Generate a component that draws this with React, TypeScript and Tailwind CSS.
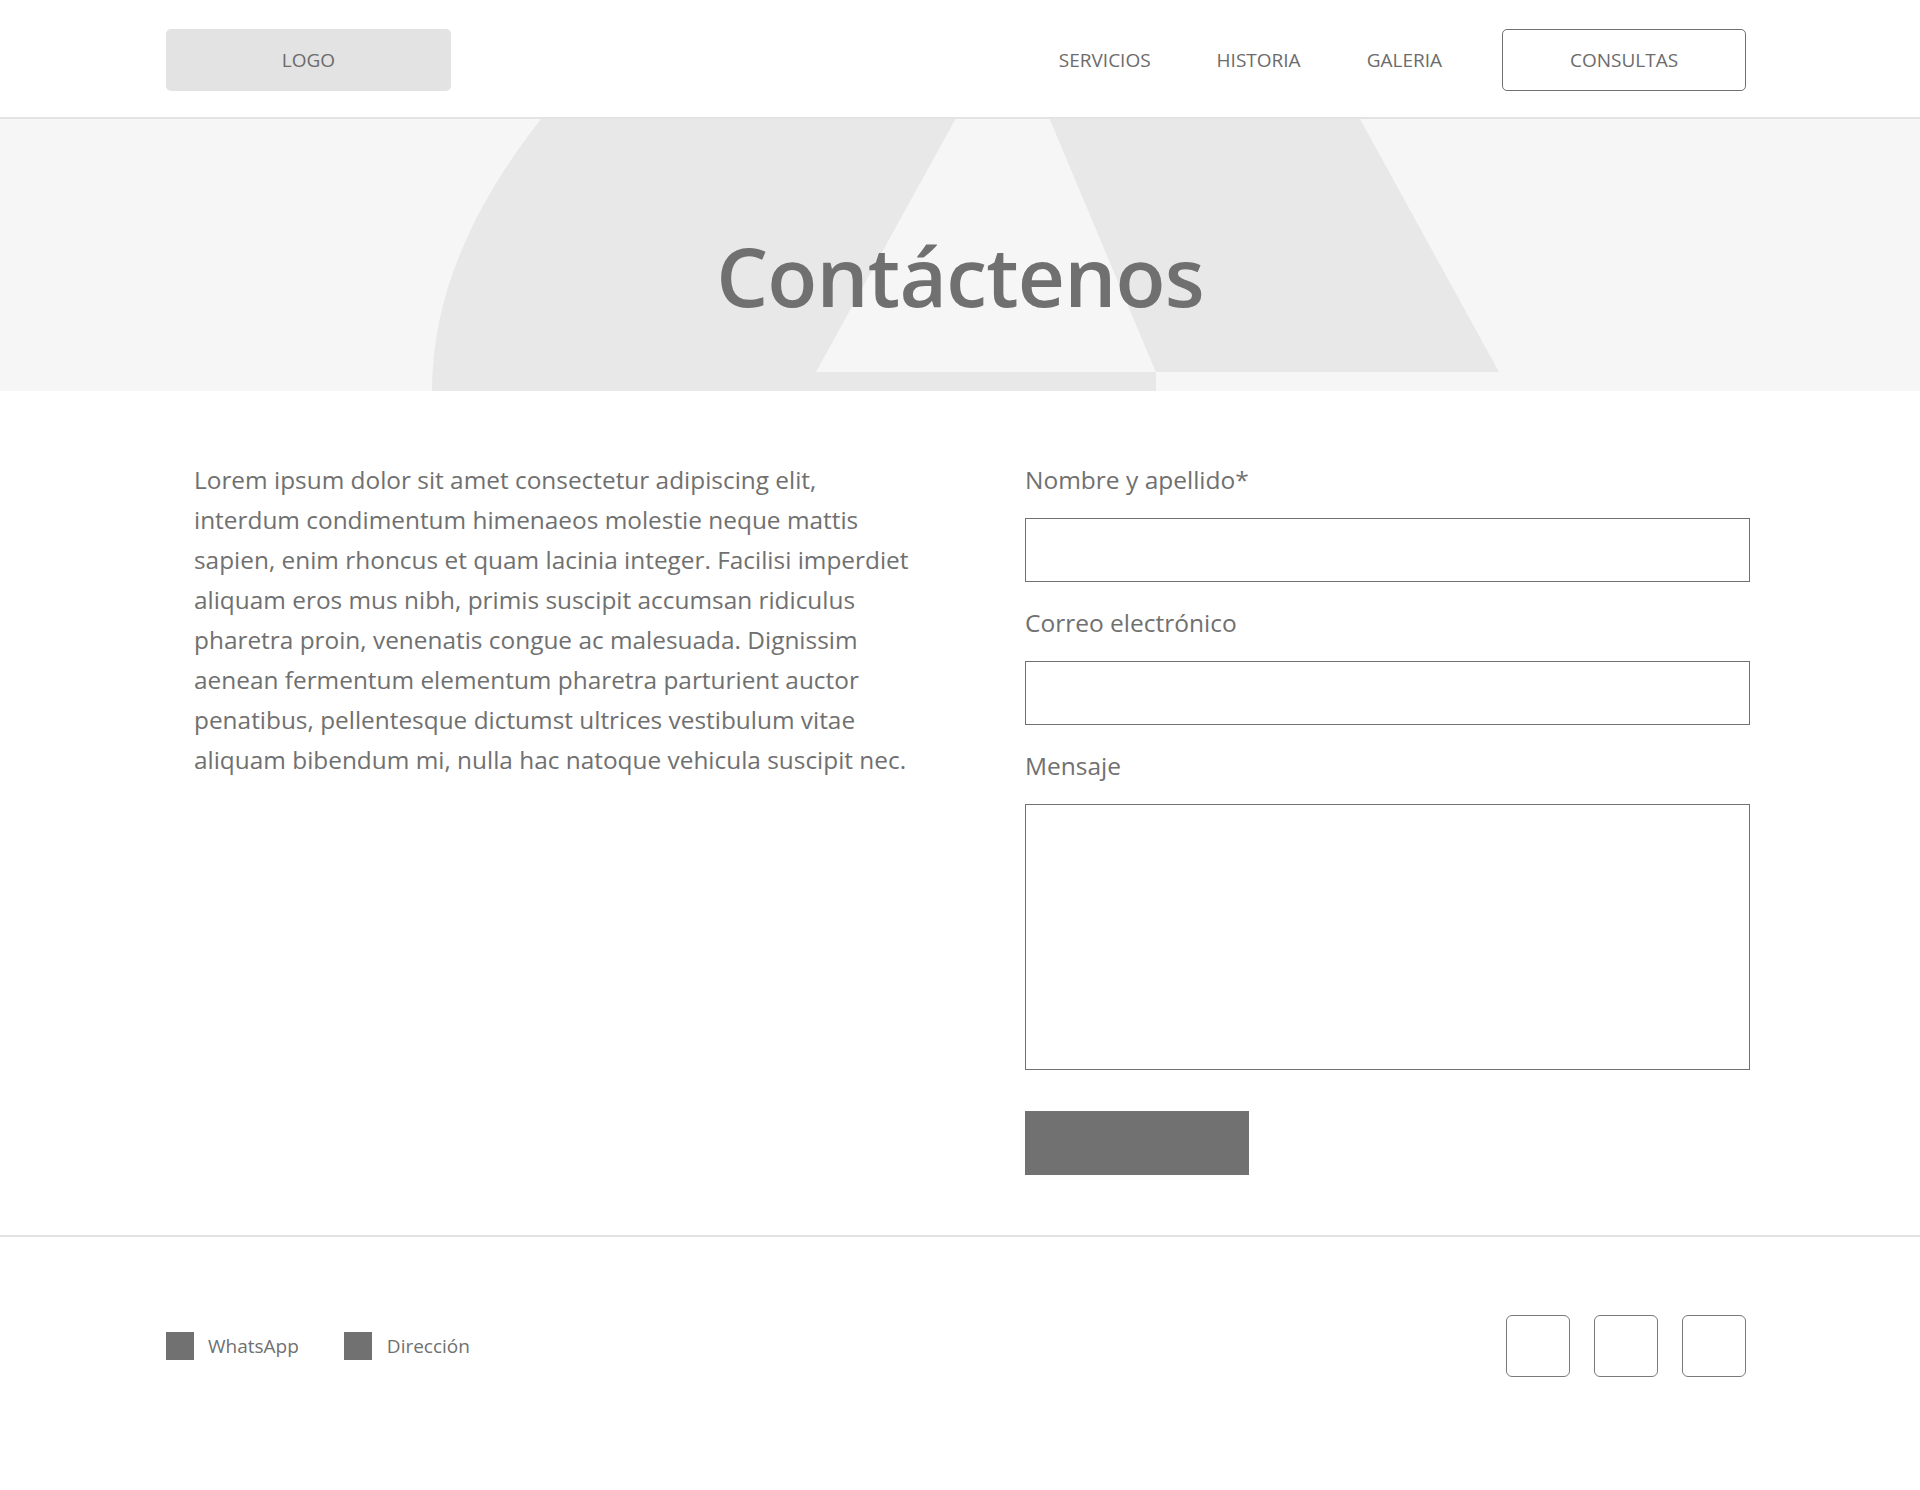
import React from "react";

const font = { fontFamily: '"Open Sans", "Noto Sans", sans-serif' };

function HeroShapes() {
  return (
    <svg
      className="absolute inset-0 h-full w-full"
      viewBox="0 0 1920 272"
      preserveAspectRatio="none"
      aria-hidden="true"
    >
      <path d="M541 0 C470 90, 432 180, 432 272 L1156 272 L1156 0 Z" fill="#e8e8e8" />
      <polygon points="1009,-97 816,253 1156,253" fill="#f6f6f6" />
      <polygon points="1050,0 1156,253 1499,253 1360,0" fill="#e8e8e8" />
    </svg>
  );
}

const navItems = ["SERVICIOS", "HISTORIA", "GALERIA"];

const lines = [
  "Lorem ipsum dolor sit amet consectetur adipiscing elit,",
  "interdum condimentum himenaeos molestie neque mattis",
  "sapien, enim rhoncus et quam lacinia integer. Facilisi imperdiet",
  "aliquam eros mus nibh, primis suscipit accumsan ridiculus",
  "pharetra proin, venenatis congue ac malesuada. Dignissim",
  "aenean fermentum elementum pharetra parturient auctor",
  "penatibus, pellentesque dictumst ultrices vestibulum vitae",
  "aliquam bibendum mi, nulla hac natoque vehicula suscipit nec.",
];

function Field({ label, tall }: { label: string; tall?: boolean }) {
  return (
    <div className="flex flex-col">
      <label className="h-[40px] text-[24.5px] leading-[40px] text-[#707070]">{label}</label>
      {tall ? (
        <textarea className="mt-[18px] h-[266px] w-full resize-none border border-[#707070] bg-white" />
      ) : (
        <input className="mt-[18px] h-[64px] w-full border border-[#707070] bg-white" />
      )}
    </div>
  );
}

export default function App() {
  return (
    <main className="min-h-[1490px] w-full bg-white text-[#707070]" style={font}>
      {/* header */}
      <header className="h-[119px] border-b-2 border-[#e3e3e3] bg-white">
        <div className="flex h-full items-start pl-[166px] pr-[174px] pt-[29px]">
          <div className="flex h-[62px] w-[285px] items-center justify-center rounded-[5px] bg-[#e3e3e3] text-[19px] text-[#6b6b6b]">
            LOGO
          </div>
          <nav className="ml-auto flex h-[62px] items-center gap-[66px] text-[19px] text-[#6b6b6b]">
            {navItems.map((item) => (
              <a key={item} href="#">
                {item}
              </a>
            ))}
          </nav>
          <a
            href="#"
            className="ml-[60px] flex h-[62px] w-[244px] items-center justify-center rounded-[5px] border border-[#707070] text-[19px] text-[#6b6b6b]"
          >
            CONSULTAS
          </a>
        </div>
      </header>

      {/* hero */}
      <section className="relative h-[272px] overflow-hidden bg-[#f6f6f6]">
        <HeroShapes />
        <div className="relative flex h-full justify-center pt-[115px]">
          <h1 className="text-[82px] font-semibold leading-[82px] tracking-[-0.01em] text-[#707070]">
            Contáctenos
          </h1>
        </div>
      </section>

      {/* content */}
      <section className="flex justify-between pl-[194px] pr-[170px] pt-[69px] pb-[60px]">
        <p className="text-[24.4px] leading-[40px] text-[#707070]">
          {lines.map((l, i) => (
            <React.Fragment key={i}>
              {l}
              {i < lines.length - 1 && <br />}
            </React.Fragment>
          ))}
        </p>
        <form className="flex w-[725px] flex-col gap-[21px]">
          <Field label="Nombre y apellido*" />
          <Field label="Correo electrónico" />
          <Field label="Mensaje" tall />
          <button type="button" className="mt-[20px] h-[64px] w-[224px] bg-[#717171]" />
        </form>
      </section>

      {/* footer */}
      <footer className="border-t-2 border-[#e3e3e3] pt-[78px] pb-[113px]">
        <div className="flex items-center pl-[166px] pr-[174px]">
          <div className="flex items-center text-[19px] text-[#707070]">
            <span className="h-[28px] w-[28px] bg-[#717171]" />
            <span className="ml-[14px]">WhatsApp</span>
            <span className="ml-[45px] h-[28px] w-[28px] bg-[#717171]" />
            <span className="ml-[15px]">Dirección</span>
          </div>
          <div className="ml-auto flex gap-[24px]">
            <a href="#" className="h-[62px] w-[64px] rounded-[6px] border border-[#7a7a7a]" />
            <a href="#" className="h-[62px] w-[64px] rounded-[6px] border border-[#7a7a7a]" />
            <a href="#" className="h-[62px] w-[64px] rounded-[6px] border border-[#7a7a7a]" />
          </div>
        </div>
      </footer>
    </main>
  );
}
